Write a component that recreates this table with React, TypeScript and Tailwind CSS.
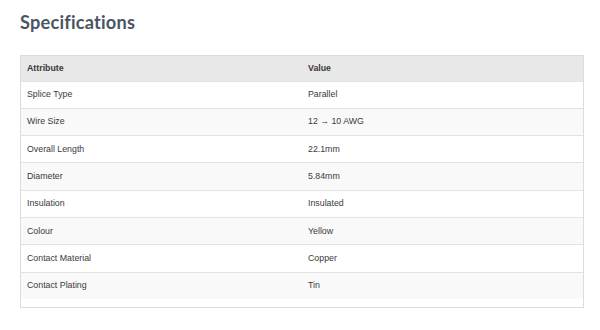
const specs: [string, string][] = [
  ["Splice Type", "Parallel"],
  ["Wire Size", "12 → 10 AWG"],
  ["Overall Length", "22.1mm"],
  ["Diameter", "5.84mm"],
  ["Insulation", "Insulated"],
  ["Colour", "Yellow"],
  ["Contact Material", "Copper"],
  ["Contact Plating", "Tin"],
];

export default function App() {
  return (
    <div className="h-[330px] w-[600px] bg-white px-5 pt-[9px]">
      <h2 className="font-['Lato',sans-serif] text-[18.2px] leading-[26px] font-bold tracking-[0.2px] text-[#4a5561]">
        Specifications
      </h2>

      <div className="mt-[20px] w-[564px] border border-[#dcdcdc] pb-[8px]">
        <table className="w-full table-fixed border-collapse font-['Liberation_Sans',Arial,sans-serif] text-[8.8px] text-[#3a3a3a]">
          <thead>
            <tr className="h-[25px] bg-[#e8e8e8]">
              <th className="px-[6px] text-left align-middle font-bold">Attribute</th>
              <th className="px-[6px] text-left align-middle font-bold">Value</th>
            </tr>
          </thead>
          <tbody>
            {specs.map(([attr, value], i) => (
              <tr
                key={attr}
                className={
                  i % 2 === 0
                    ? "h-[27.3px] border-t border-[#e2e2e2] bg-white"
                    : "h-[27.3px] border-t border-[#e2e2e2] bg-[#f9f9f9]"
                }
              >
                <td className="px-[6px] align-middle">{attr}</td>
                <td className="px-[6px] align-middle">{value}</td>
              </tr>
            ))}
          </tbody>
        </table>
      </div>
    </div>
  );
}
